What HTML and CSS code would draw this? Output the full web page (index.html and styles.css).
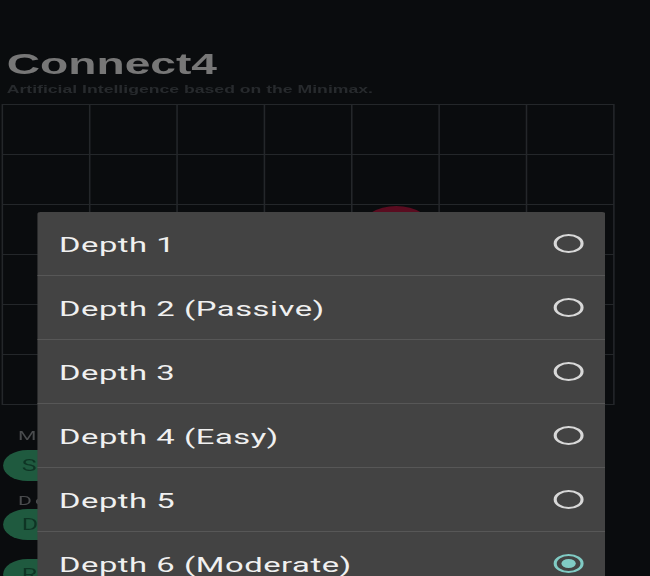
FILE: index.html
```html
<!DOCTYPE html>
<html lang="en">
<head>
<meta charset="utf-8">
<title>Connect4</title>
<link rel="stylesheet" href="styles.css">
</head>
<body>
<div class="stage">
  <header class="head">
    <h1 class="title">Connect4</h1>
    <p class="subtitle">Artificial Intelligence based on the Minimax.</p>
  </header>

  <div class="board">
    <div class="cell"></div><div class="cell"></div><div class="cell"></div><div class="cell"></div><div class="cell"></div><div class="cell"></div><div class="cell"></div>
    <div class="cell"></div><div class="cell"></div><div class="cell"></div><div class="cell"></div><div class="cell"></div><div class="cell"></div><div class="cell"></div>
    <div class="cell"></div><div class="cell"></div><div class="cell"></div><div class="cell"></div><div class="cell"><span class="disc"></span></div><div class="cell"></div><div class="cell"></div>
    <div class="cell"></div><div class="cell"></div><div class="cell"></div><div class="cell"></div><div class="cell"></div><div class="cell"></div><div class="cell"></div>
    <div class="cell"></div><div class="cell"></div><div class="cell"></div><div class="cell"></div><div class="cell"></div><div class="cell"></div><div class="cell"></div>
    <div class="cell"></div><div class="cell"></div><div class="cell"></div><div class="cell"></div><div class="cell"></div><div class="cell"></div><div class="cell"></div>
  </div>

  <section class="controls">
    <div class="label label-first">Mode</div>
    <button class="pill pill-first">Single Player</button>
    <div class="label label-second">Depth</div>
    <button class="pill pill-second">Depth 6</button>
    <button class="pill pill-third">Restart</button>
  </section>

  <div class="dialog">
    <div class="row"><span class="row-text">Depth 1</span><svg class="radio" viewBox="0 0 21 21"><circle cx="10.5" cy="10.5" r="8.6" class="ring"/></svg></div>
    <div class="row"><span class="row-text">Depth 2 (Passive)</span><svg class="radio" viewBox="0 0 21 21"><circle cx="10.5" cy="10.5" r="8.6" class="ring"/></svg></div>
    <div class="row"><span class="row-text">Depth 3</span><svg class="radio" viewBox="0 0 21 21"><circle cx="10.5" cy="10.5" r="8.6" class="ring"/></svg></div>
    <div class="row"><span class="row-text">Depth 4 (Easy)</span><svg class="radio" viewBox="0 0 21 21"><circle cx="10.5" cy="10.5" r="8.6" class="ring"/></svg></div>
    <div class="row"><span class="row-text">Depth 5</span><svg class="radio" viewBox="0 0 21 21"><circle cx="10.5" cy="10.5" r="8.6" class="ring"/></svg></div>
    <div class="row"><span class="row-text">Depth 6 (Moderate)</span><svg class="radio" viewBox="0 0 21 21"><circle cx="10.5" cy="10.5" r="8.6" class="ring ring-on"/><circle cx="10.5" cy="10.5" r="4.6" class="dot"/></svg></div>
  </div>
</div>
</body>
</html>
```

FILE: styles.css
```css
html, body {
  margin: 0;
  padding: 0;
  background: #0a0c0e;
  overflow: hidden;
  height: 576px;
}

.stage {
  position: relative;
  width: 416.67px;
  height: 576px;
  transform: scaleX(1.56);
  transform-origin: 0 0;
  font-family: Roboto, "Liberation Sans", sans-serif;
}

.head {
  padding: 48.5px 0 0 4.3px;
}

.title {
  margin: 0;
  font-family: "Liberation Sans", Arial, sans-serif;
  font-weight: bold;
  font-size: 29.6px;
  line-height: 29px;
  color: #777777;
}

.subtitle {
  margin: 5.4px 0 0 0;
  font-family: "Liberation Sans", Arial, sans-serif;
  font-weight: bold;
  font-size: 11.3px;
  line-height: 13px;
  color: #272a2d;
  white-space: nowrap;
}

.board {
  margin: 8.1px 0 0 1.2px;
  width: 393px;
  height: 301px;
  box-sizing: border-box;
  display: grid;
  grid-template-columns: repeat(7, 1fr);
  grid-template-rows: repeat(6, 1fr);
  gap: 1px;
  padding: 1px;
  background: #24272a;
}

.cell {
  background: #0a0c0e;
  display: flex;
  align-items: center;
  justify-content: center;
}

.disc {
  width: 46px;
  height: 46px;
  border-radius: 50%;
  background: #5a0c20;
}

.controls {
  display: flex;
  flex-direction: column;
  align-items: flex-start;
  padding-left: 2px;
}

.label {
  font-size: 13.5px;
  line-height: 15px;
  letter-spacing: 2px;
  color: #4a4c4e;
  padding-left: 9.6px;
}

.label-first { margin-top: 23.5px; }
.label-second { margin-top: 12px; }

.pill {
  height: 31px;
  width: 110px;
  border: 0;
  border-radius: 15.5px;
  background: #1f5a3f;
  color: #0e3424;
  font-family: Roboto, "Liberation Sans", sans-serif;
  font-size: 16px;
  text-align: left;
  padding: 0 0 0 12px;
}

.pill-first { margin-top: 7px; }
.pill-second { margin-top: 0.6px; }
.pill-third { margin-top: 19px; }

.dialog {
  position: absolute;
  left: 23.7px;
  top: 212px;
  width: 364.8px;
  background: #434343;
  border-radius: 2px 2px 0 0;
}

.row {
  height: 63px;
  border-bottom: 1px solid #575757;
  display: flex;
  align-items: center;
  justify-content: space-between;
  padding: 0 13.9px 0 14.1px;
}

.row-text {
  font-size: 21px;
  line-height: 24px;
  letter-spacing: 0.35px;
  padding-top: 2px;
  color: #f0f0f0;
}

.radio {
  width: 21px;
  height: 21px;
  display: block;
}

.ring {
  fill: none;
  stroke: #d8d8d8;
  stroke-width: 2;
}

.ring-on {
  stroke: #80cbc4;
}

.dot {
  fill: #80cbc4;
}
```
